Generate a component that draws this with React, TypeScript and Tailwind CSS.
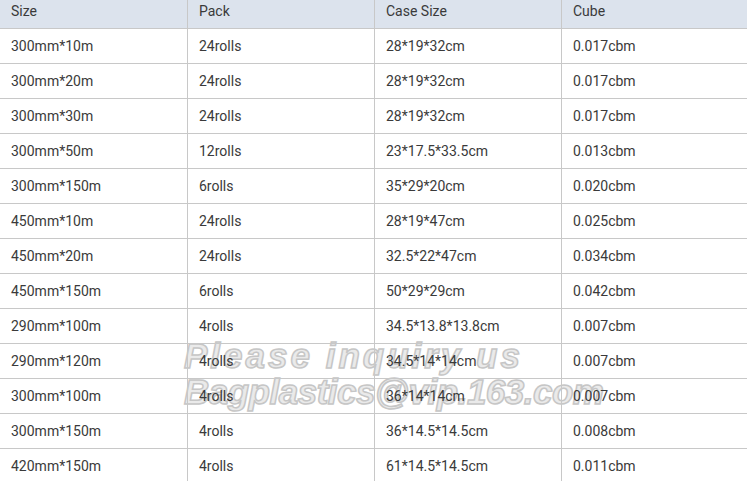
const rows: [string, string, string, string][] = [
  ['300mm*10m', '24rolls', '28*19*32cm', '0.017cbm'],
  ['300mm*20m', '24rolls', '28*19*32cm', '0.017cbm'],
  ['300mm*30m', '24rolls', '28*19*32cm', '0.017cbm'],
  ['300mm*50m', '12rolls', '23*17.5*33.5cm', '0.013cbm'],
  ['300mm*150m', '6rolls', '35*29*20cm', '0.020cbm'],
  ['450mm*10m', '24rolls', '28*19*47cm', '0.025cbm'],
  ['450mm*20m', '24rolls', '32.5*22*47cm', '0.034cbm'],
  ['450mm*150m', '6rolls', '50*29*29cm', '0.042cbm'],
  ['290mm*100m', '4rolls', '34.5*13.8*13.8cm', '0.007cbm'],
  ['290mm*120m', '4rolls', '34.5*14*14cm', '0.007cbm'],
  ['300mm*100m', '4rolls', '36*14*14cm', '0.007cbm'],
  ['300mm*150m', '4rolls', '36*14.5*14.5cm', '0.008cbm'],
  ['420mm*150m', '4rolls', '61*14.5*14.5cm', '0.011cbm'],
];

const cols = 'grid grid-cols-[187px_187px_187px_1fr]';

export default function App() {
  return (
    <div className="relative w-[747px] h-[481px] overflow-hidden bg-white text-[14px] text-[#3a3a3a] font-['Roboto',sans-serif]">
      {/* watermark sits under the table */}
      <div className="absolute left-[184px] top-[338px] pointer-events-none font-['Liberation_Sans',sans-serif] font-bold italic text-[35px] leading-[36px] text-[#eaeaea] [-webkit-text-stroke:1.5px_#c6c6c6]">
        <div className="tracking-[3px]">Please inquiry us</div>
        <div className="tracking-[-0.5px]">Bagplastics@vip.163.com</div>
      </div>
      <div className="relative z-10">
        <div className={`${cols} h-[29px] bg-[#dce3ed] border-b border-[#c8c8c8]`}>
          {['Size', 'Pack', 'Case Size', 'Cube'].map((h, i) => (
            <div key={h} className={`flex items-center pl-[11px] pb-[6px] ${i > 0 ? 'border-l border-[#c8c8c8]' : ''}`}>
              {h}
            </div>
          ))}
        </div>
        {rows.map((r, ri) => (
          <div key={ri} className={`${cols} h-[35px] border-b border-[#c8c8c8]`}>
            {r.map((c, i) => (
              <div key={i} className={`flex items-center pl-[11px] ${i > 0 ? 'border-l border-[#c8c8c8]' : ''}`}>
                {c}
              </div>
            ))}
          </div>
        ))}
      </div>
    </div>
  );
}
